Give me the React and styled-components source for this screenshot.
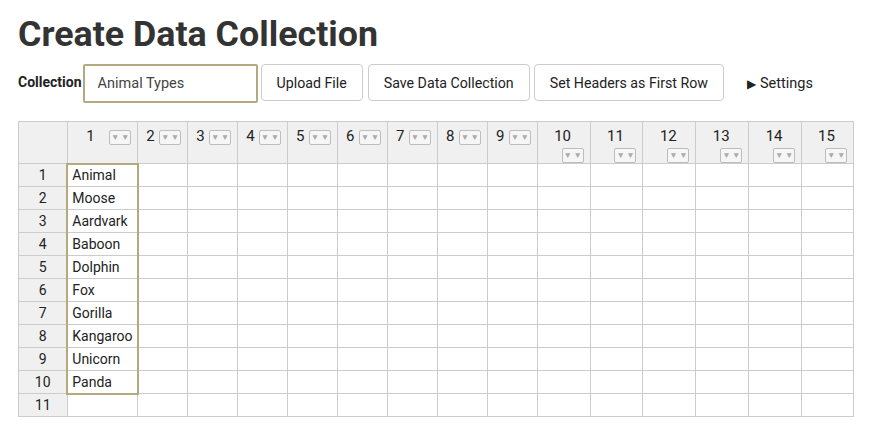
import styled, { createGlobalStyle } from "styled-components";

const GlobalStyle = createGlobalStyle`
  body {
    margin: 0;
    background: #fff;
    font-family: Roboto, "Liberation Sans", sans-serif;
    color: #222;
  }
`;

const Page = styled.div`
  padding: 13px 16px 0 18px;
`;

const Title = styled.h1`
  margin: 0;
  font-size: 35.8px;
  line-height: 43px;
  font-weight: 700;
  color: #333;
`;

const Toolbar = styled.div`
  display: flex;
  align-items: center;
  margin-top: 8px;
  height: 39px;
`;

const Label = styled.label`
  font-size: 14px;
  font-weight: 700;
  color: #222;
  margin-right: 1px;
  align-self: flex-start;
  margin-top: 10px;
`;

const NameInput = styled.input`
  box-sizing: border-box;
  width: 175px;
  height: 39px;
  border: 2px solid #b4a97f;
  border-radius: 2px;
  padding: 0 13px;
  font-family: Roboto, "Liberation Sans", sans-serif;
  font-size: 14.5px;
  color: #444;
  outline: none;
`;

const Button = styled.button`
  box-sizing: border-box;
  height: 37px;
  margin-left: ${(p) => p.gap}px;
  padding: 0 15px;
  background: #fff;
  border: 1px solid #ccc;
  border-radius: 4px;
  font-family: Roboto, "Liberation Sans", sans-serif;
  font-size: 14.2px;
  color: #222;
  align-self: flex-start;
`;

const Settings = styled.div`
  margin-left: 23px;
  font-size: 14.5px;
  color: #222;
  display: flex;
  align-items: center;
  gap: 4px;
`;

const Arrow = styled.span`
  font-size: 12px;
`;

const Grid = styled.table`
  margin-top: 18px;
  border-collapse: collapse;
  table-layout: fixed;
  font-size: 14px;
`;

const HeadCell = styled.th`
  height: 41px;
  padding: 5px 6px 0 4px;
  background: #f0f0f0;
  border: 1px solid #ccc;
  font-weight: 400;
  vertical-align: top;
  box-sizing: border-box;
`;

const HeadInner = styled.div`
  display: flex;
  flex-direction: ${(p) => (p.$stacked ? "column" : "row")};
  align-items: ${(p) => (p.$stacked ? "stretch" : "center")};
  gap: ${(p) => (p.$stacked ? "3px" : "0")};
`;

const HeadNum = styled.span`
  flex: 1;
  text-align: center;
  font-size: 15px;
  line-height: 18px;
  color: #222;
`;

const DropBtn = styled.span`
  align-self: flex-end;
  box-sizing: border-box;
  width: 22px;
  height: 15px;
  border: 1px solid #bdbdbd;
  border-radius: 2px;
  background: #f6f6f6;
  color: #aaa;
  font-size: 8.5px;
  line-height: 13px;
  text-align: center;
  letter-spacing: 1.5px;
  padding-left: 1px;
`;

const RowHead = styled.th`
  height: 23px;
  padding: 0;
  background: #f0f0f0;
  border: 1px solid #ccc;
  font-weight: 400;
  font-size: 14px;
  color: #222;
  text-align: center;
  box-sizing: border-box;
`;

const Cell = styled.td`
  height: 23px;
  padding: 0 4px;
  border: 1px solid #ccc;
  font-size: 14px;
  color: #222;
  white-space: nowrap;
  overflow: hidden;
  box-sizing: border-box;
  ${(p) =>
    p.$sel &&
    `border-left: 2px solid #b4a97f; border-right: 2px solid #b4a97f;`}
  ${(p) => p.$selTop && `border-top: 2px solid #b4a97f;`}
  ${(p) => p.$selBottom && `border-bottom: 2px solid #b4a97f;`}
`;

const animals = [
  "Animal",
  "Moose",
  "Aardvark",
  "Baboon",
  "Dolphin",
  "Fox",
  "Gorilla",
  "Kangaroo",
  "Unicorn",
  "Panda",
  "",
];

const cols = Array.from({ length: 15 }, (_, i) => i + 1);
const widths = [49, 70, 50, 50, 50, 50, 50, 50, 50, 50, 53, 53, 53, 53, 53, 52];

const App = () => {
  return (
    <Page>
      <GlobalStyle />
      <Title>Create Data Collection</Title>
      <Toolbar>
        <Label>Collection</Label>
        <NameInput defaultValue="Animal Types" />
        <Button gap={3}>Upload File</Button>
        <Button gap={5}>Save Data Collection</Button>
        <Button gap={4}>Set Headers as First Row</Button>
        <Settings>
          <Arrow>▶</Arrow>Settings
        </Settings>
      </Toolbar>
      <Grid>
        <colgroup>
          {widths.map((w, i) => (
            <col key={i} style={{ width: w }} />
          ))}
        </colgroup>
        <thead>
          <tr>
            <HeadCell />
            {cols.map((c) => (
              <HeadCell key={c}>
                <HeadInner $stacked={c >= 10}>
                  <HeadNum>{c}</HeadNum>
                  <DropBtn>▼▼</DropBtn>
                </HeadInner>
              </HeadCell>
            ))}
          </tr>
        </thead>
        <tbody>
          {animals.map((a, r) => (
            <tr key={r}>
              <RowHead>{r + 1}</RowHead>
              {cols.map((c) => {
                const sel = c === 1 && r < 10;
                return (
                  <Cell
                    key={c}
                    $sel={sel}
                    $selTop={sel && r === 0}
                    $selBottom={sel && r === 9}
                  >
                    {c === 1 ? a : ""}
                  </Cell>
                );
              })}
            </tr>
          ))}
        </tbody>
      </Grid>
    </Page>
  );
};

export default App;
